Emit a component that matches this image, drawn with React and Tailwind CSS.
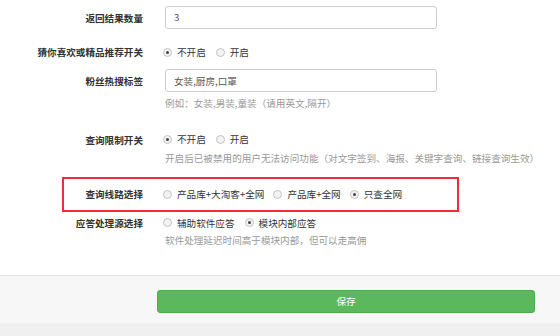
import React from "react";

const font = { fontFamily: '"Noto Sans CJK SC", "Liberation Sans", sans-serif' };

const Radio = ({ checked, label }) => (
  <label className="flex items-center gap-[5px] text-[9.6px] text-[#333]">
    <span className="w-[9px] h-[9px] rounded-full border border-[#c4c4c4] bg-[#f2f2f2] flex items-center justify-center">
      {checked && <span className="w-[3px] h-[3px] rounded-full bg-[#444]" />}
    </span>
    <span>{label}</span>
  </label>
);

const Label = ({ children, className = "w-[143px]" }) => (
  <div className={`${className} shrink-0 text-right text-[9.6px] font-bold text-[#333] leading-[14px]`}>
    {children}
  </div>
);

const Help = ({ children, className = "" }) => (
  <p className={`ml-[165px] text-[9.6px] leading-[14px] text-[#999] ${className}`}>{children}</p>
);

export default function App() {
  return (
    <div className="w-[560px] h-[336px] bg-white flex flex-col overflow-hidden" style={font}>
      {/* 返回结果数量 */}
      <div className="flex items-center mt-[6px]">
        <Label>返回结果数量</Label>
        <div className="ml-[22px] w-[272px] h-[23px] border border-[#ccc] rounded-[3px] px-[8px] flex items-center text-[9.6px] text-[#555]">
          3
        </div>
      </div>

      {/* 猜你喜欢 */}
      <div className="flex items-center mt-[16px]">
        <Label>猜你喜欢或精品推荐开关</Label>
        <div className="ml-[20px] flex items-center gap-[10px]">
          <Radio checked label="不开启" />
          <Radio label="开启" />
        </div>
      </div>

      {/* 粉丝热搜标签 */}
      <div className="flex items-center mt-[10px]">
        <Label>粉丝热搜标签</Label>
        <div className="ml-[22px] w-[272px] h-[23px] border border-[#ccc] rounded-[3px] px-[8px] flex items-center text-[9.6px] text-[#555]">
          女装,厨房,口罩
        </div>
      </div>
      <Help className="mt-[4px]">例如：女装,男装,童装（请用英文,隔开）</Help>

      {/* 查询限制开关 */}
      <div className="flex items-center mt-[22px]">
        <Label>查询限制开关</Label>
        <div className="ml-[20px] flex items-center gap-[10px]">
          <Radio checked label="不开启" />
          <Radio label="开启" />
        </div>
      </div>
      <Help className="mt-[4px]">开启后已被禁用的用户无法访问功能（对文字签到、海报、关键字查询、链接查询生效）</Help>

      {/* 查询线路选择 */}
      <div className="ml-[62px] mt-[12px] w-[397px] h-[35px] border-2 border-[#ec2f36] flex items-center">
        <Label className="w-[79px]">查询线路选择</Label>
        <div className="ml-[20px] flex items-center gap-[9px]">
          <Radio label="产品库+大淘客+全网" />
          <Radio label="产品库+全网" />
          <Radio checked label="只查全网" />
        </div>
      </div>

      {/* 应答处理源选择 */}
      <div className="flex items-center mt-[4px]">
        <Label>应答处理源选择</Label>
        <div className="ml-[20px] flex items-center gap-[10px]">
          <Radio label="辅助软件应答" />
          <Radio checked label="模块内部应答" />
        </div>
      </div>
      <Help className="mt-[3px]">软件处理延迟时间高于模块内部，但可以走高佣</Help>

      {/* footer */}
      <div className="mt-[28px] border-t border-[#e3e3e3] bg-[#f7f7f7] pt-[14px] pb-[10px]">
        <button className="ml-[157px] w-[378px] h-[23px] rounded-[3px] bg-[#5cb85c] border border-[#4cae4c] text-white text-[9.6px] flex items-center justify-center">
          保存
        </button>
      </div>
      <div className="flex-1 bg-[#f0f0f0]" />
    </div>
  );
}
